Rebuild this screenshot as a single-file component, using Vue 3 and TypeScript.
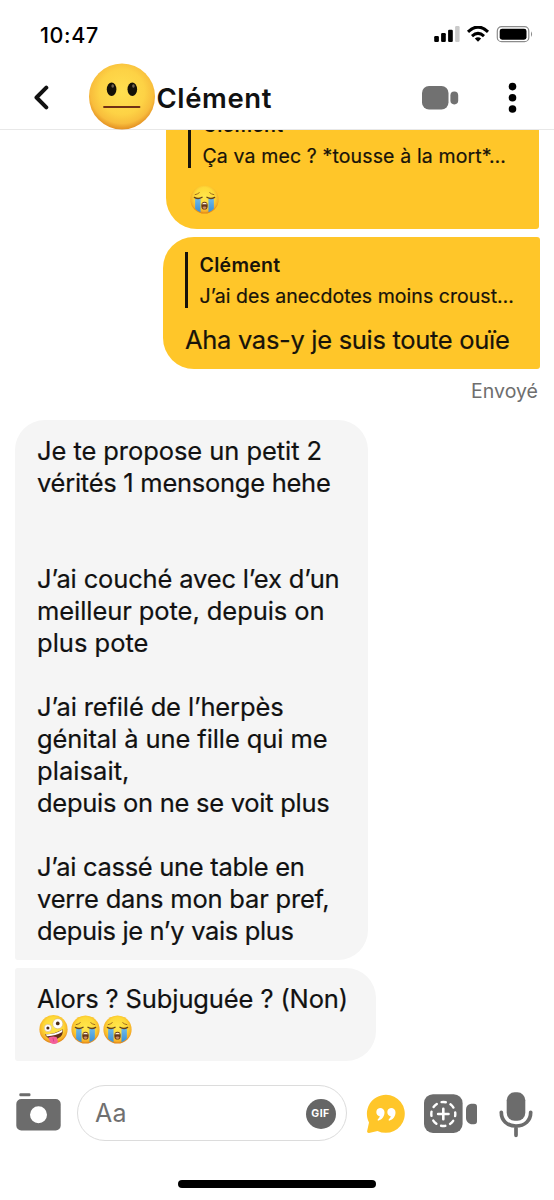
<script setup lang="ts">
import type { Directive } from 'vue'

interface Line {
  text: string
  width: number
}

interface Reply {
  author: string
  quote: Line
  inset: boolean
  body?: Line
}

// Tracks a line of text out (or in) so that it spans the given width.
const vFit: Directive<HTMLElement, number> = {
  mounted(el, { value }) {
    const count = (el.textContent ?? '').length
    if (!count) return
    const natural = el.getBoundingClientRect().width
    el.style.letterSpacing = `${(value - natural) / count}px`
  },
}

const replies: Reply[] = [
  { author: 'Clément', inset: true, quote: { text: 'Ça va mec ? *tousse à la mort*…', width: 303.5 } },
  {
    author: 'Clément',
    inset: false,
    quote: { text: 'J’ai des anecdotes moins croust…', width: 314.5 },
    body: { text: 'Aha vas-y je suis toute ouïe', width: 324.5 },
  },
]

const story: Line[] = [
  { text: 'Je te propose un petit 2', width: 285 },
  { text: 'vérités 1 mensonge hehe', width: 293.5 },
  { text: '', width: 0 },
  { text: '', width: 0 },
  { text: 'J’ai couché avec l’ex d’un', width: 302.5 },
  { text: 'meilleur pote, depuis on', width: 287.5 },
  { text: 'plus pote', width: 111.5 },
  { text: '', width: 0 },
  { text: 'J’ai refilé de l’herpès', width: 246.5 },
  { text: 'génital à une fille qui me', width: 290.5 },
  { text: 'plaisait,', width: 92.5 },
  { text: 'depuis on ne se voit plus', width: 292.5 },
  { text: '', width: 0 },
  { text: 'J’ai cassé une table en', width: 267.5 },
  { text: 'verre dans mon bar pref,', width: 292.5 },
  { text: 'depuis je n’y vais plus', width: 256.5 },
]
</script>

<template>
  <svg class="defs" width="0" height="0" aria-hidden="true">
    <defs>
      <radialGradient id="skin" cx="50%" cy="42%" r="58%">
        <stop offset="0" stop-color="#ffe84d" />
        <stop offset="0.6" stop-color="#fed938" />
        <stop offset="0.86" stop-color="#f6b028" />
        <stop offset="1" stop-color="#dc7d12" />
      </radialGradient>
      <linearGradient id="tear" x1="0" y1="0" x2="0" y2="1">
        <stop offset="0" stop-color="#6db9ea" />
        <stop offset="1" stop-color="#3b8fd6" />
      </linearGradient>
      <radialGradient id="face" cx="50%" cy="43%" r="57%">
        <stop offset="0" stop-color="#ffdf50" />
        <stop offset="0.6" stop-color="#fdd245" />
        <stop offset="0.84" stop-color="#f8bd3c" />
        <stop offset="1" stop-color="#e38f22" />
      </radialGradient>
      <symbol id="cry" viewBox="0 0 30 30">
        <circle cx="15" cy="15" r="14.6" fill="url(#skin)" />
        <path d="M5.3 14.200h5.600v14a14.400 14.400 0 0 1-5.600-3.600zM19.100 14.200h5.600v10.400a14.400 14.400 0 0 1-5.600 3.600z" fill="url(#tear)" />
        <path d="M4.500 12.800q4 2.400 8-.1M17.500 12.700q4 2.500 8 .1" fill="none" stroke="#65401a" stroke-width="1.300" stroke-linecap="round" />
        <path d="M5.300 10q2.500-.4 4.300-2M20.400 8q1.800 1.600 4.300 2" fill="none" stroke="#9b6720" stroke-width="1" stroke-linecap="round" />
        <ellipse cx="15" cy="21.400" rx="3.300" ry="4" fill="#673719" />
        <path d="M12.600 19.300q2.400-1.700 4.800 0v.5h-4.800z" fill="#fff4df" />
        <ellipse cx="15" cy="23.500" rx="2" ry="1.200" fill="#c98a62" />
      </symbol>
      <symbol id="zany" viewBox="0 0 30 30">
        <circle cx="15" cy="14.700" r="14.600" fill="url(#skin)" />
        <circle cx="9.200" cy="13.400" r="3.800" fill="#fff" stroke="#c9a278" stroke-width=".5" />
        <circle cx="19.400" cy="9" r="5.200" fill="#fff" stroke="#c9a278" stroke-width=".5" />
        <circle cx="9.200" cy="13.500" r="1.600" fill="#4a2a17" />
        <circle cx="19.400" cy="8.700" r="1.900" fill="#4a2a17" />
        <path d="M6 20.200Q17 19.800 24.500 14.800Q26 22 18.500 24.800Q11 27.200 6 20.200z" fill="#63301b" />
        <path d="M7 20.300Q17 19.800 24.200 15.300L24 17.700Q17 22 8.200 21.900z" fill="#fff" />
        <path d="M9.700 23.200Q14 21.700 18.200 22.700L19.500 27Q19.600 30 15.600 30Q12 30 11.200 27.200z" fill="#f45f9c" />
        <path d="M14.500 24l.8 3.500" stroke="#cf3c7c" stroke-width=".8" />
      </symbol>
    </defs>
  </svg>

  <main class="screen">
    <div class="status">
      <span v-fit="59" class="clock">10:47</span>
      <svg class="indicators" width="100" height="18" viewBox="0 0 100 18" role="img" aria-label="Réseau, Wi-Fi, batterie">
        <rect x="0.2" y="10" width="4.7" height="6" rx="1.2" />
        <rect x="7.1" y="7" width="4.7" height="9" rx="1.2" />
        <rect x="14.1" y="3.8" width="4.7" height="12.2" rx="1.2" />
        <rect x="21.1" y="0" width="4.5" height="16" rx="1.2" fill="#cacaca" />
        <g fill="none" stroke="#000" stroke-width="3">
          <path d="M34 5.800Q44 -3.700 54 5.800" />
          <path d="M38 10.100Q44 4.600 50 10.100" />
        </g>
        <path d="M40.800 12.600Q44 10 47.200 12.600L44 15.800z" />
        <rect x="63.3" y="0.6" width="31.5" height="15.1" rx="4.3" fill="none" stroke="#8c8c8c" stroke-width="1.2" />
        <rect x="65.7" y="2.7" width="26.8" height="11" rx="2.4" />
        <path d="M97 5.300q2.200 2.800 0 5.600z" fill="#8c8c8c" />
      </svg>
    </div>

    <header class="header">
      <svg class="back" width="16" height="25" viewBox="0 0 16 25" role="img" aria-label="Retour">
        <path d="M13.300 2.700L3.500 12.500l9.800 9.800" fill="none" stroke="#111" stroke-width="4" stroke-linecap="round" stroke-linejoin="round" />
      </svg>
      <svg class="avatar" width="66" height="67" viewBox="0 0 66 67" role="img" aria-label="Clément">
        <circle cx="33" cy="33.500" r="33" fill="url(#face)" />
        <ellipse cx="22.600" cy="26.200" rx="4.800" ry="6.800" fill="#141008" />
        <ellipse cx="43.300" cy="26.200" rx="4.800" ry="6.800" fill="#141008" />
        <ellipse cx="23.700" cy="23" rx="1.300" ry="1.700" fill="#736451" />
        <ellipse cx="44.400" cy="23" rx="1.300" ry="1.700" fill="#736451" />
        <path d="M15 44h35.500" stroke="#713014" stroke-width="1.800" stroke-linecap="round" />
      </svg>
      <h1 class="name"><span v-fit="115.5">Clément</span></h1>
      <svg class="video" width="38" height="26" viewBox="0 0 38 26" fill="#717171" role="img" aria-label="Appel vidéo">
        <rect x="0" y="1" width="26.500" height="23.500" rx="7" />
        <rect x="28.400" y="6.600" width="7.800" height="12.800" rx="3.800" />
      </svg>
      <svg class="more" width="10" height="32" viewBox="0 0 10 32" role="img" aria-label="Plus">
        <circle cx="4.500" cy="4.600" r="3.800" />
        <circle cx="4.500" cy="15.800" r="3.800" />
        <circle cx="4.500" cy="27" r="3.800" />
      </svg>
    </header>

    <section class="chat">
      <article v-for="(reply, i) in replies" :key="i" class="sent" :class="{ inset: reply.inset }">
        <div class="quoted">
          <p class="author"><span v-fit="81">{{ reply.author }}</span></p>
          <p class="excerpt"><span v-fit="reply.quote.width">{{ reply.quote.text }}</span></p>
        </div>
        <p v-if="reply.body" class="body"><span v-fit="reply.body.width">{{ reply.body.text }}</span></p>
        <svg v-else class="emoji" role="img" aria-label="😭"><use href="#cry" /></svg>
      </article>
      <p class="sent-state"><span v-fit="67">Envoyé</span></p>

      <article class="received story">
        <p v-for="(line, i) in story" :key="i" class="line">
          <span v-if="line.text" v-fit="line.width">{{ line.text }}</span>
        </p>
      </article>
      <article class="received short">
        <p class="line"><span v-fit="311">Alors ? Subjuguée ? (Non)</span></p>
        <div class="emojis">
          <svg class="emoji" role="img" aria-label="🤪"><use href="#zany" /></svg>
          <svg class="emoji" role="img" aria-label="😭"><use href="#cry" /></svg>
          <svg class="emoji" role="img" aria-label="😭"><use href="#cry" /></svg>
        </div>
      </article>
    </section>

    <footer class="composer">
      <svg class="camera" width="46" height="38" viewBox="0 0 46 38" role="img" aria-label="Photo">
        <rect x="3.300" y="0.300" width="11.200" height="2.900" rx="1.200" fill="#6c6c6c" />
        <path fill-rule="evenodd" d="M6 6h33.700a5 5 0 0 1 5 5v21.500a5 5 0 0 1-5 5H5.300a5 5 0 0 1-5-5V11a5 5 0 0 1 5-5zM22.500 13.300a8.500 8.500 0 1 0 0 17 8.500 8.500 0 1 0 0-17z" fill="#6c6c6c" />
      </svg>
      <div class="field">
        <span v-fit="32" class="hint">Aa</span>
        <span class="gif"><span v-fit="18.5">GIF</span></span>
      </div>
      <svg class="question" width="40" height="40" viewBox="0 0 40 40" role="img" aria-label="Question">
        <path d="M20 .8a19 19 0 1 1-8.500 36.100L3 39Q.6 39.200 1.200 36.700L3 28.500A19 19 0 0 1 20 .8z" fill="#ffc629" />
        <g fill="#fff">
          <path d="M14 14a4.300 4.300 0 0 1 4.500 4.600c0 4-2.700 7.100-5.900 8-.8.200-1.400-.6-.7-1.300q1.600-1.300 1.900-3A4.200 4.200 0 0 1 14 14z" />
          <path d="M25 14a4.300 4.300 0 0 1 4.500 4.600c0 4-2.700 7.100-5.900 8-.8.200-1.400-.6-.7-1.300q1.600-1.300 1.900-3A4.200 4.200 0 0 1 25 14z" />
        </g>
      </svg>
      <svg class="clip" width="54" height="40" viewBox="0 0 54 40" role="img" aria-label="Vidéo">
        <rect x="0" y="0.200" width="38.600" height="38.800" rx="9" fill="#6c6c6c" />
        <path d="M47 9.700h3q3 0 3 3v14.500q0 3-3 3h-3Q42 28.500 42 24v-8.500Q42 11 47 9.700z" fill="#6c6c6c" />
        <circle cx="19.300" cy="20" r="12" fill="none" stroke="#fff" stroke-width="2.400" stroke-dasharray="4.400 5.025" stroke-dashoffset="2.200" stroke-linecap="round" />
        <path d="M19.300 14.800v10.400M14.100 20h10.400" stroke="#fff" stroke-width="2.600" stroke-linecap="round" />
      </svg>
      <svg class="mic" width="34" height="46" viewBox="0 0 34 46" role="img" aria-label="Message vocal">
        <rect x="7.700" y="0.300" width="18.600" height="28.500" rx="8" fill="#6c6c6c" />
        <path d="M2.300 20.300C2.300 28.500 8 34 17 34s14.700-5.500 14.700-13.700M17 34v9.300" fill="none" stroke="#6c6c6c" stroke-width="3.700" stroke-linecap="round" />
      </svg>
    </footer>
    <div class="home-bar"></div>
  </main>
</template>

<style>
body {
  margin: 0;
  background: #fff;
}
</style>

<style scoped>
.defs {
  position: absolute;
}

.screen {
  display: flex;
  flex-direction: column;
  width: 554px;
  height: 1200px;
  overflow: hidden;
  background: #fff;
  color: #111;
  font-family: Inter, "Liberation Sans", sans-serif;
}

p,
h1 {
  margin: 0;
  white-space: nowrap;
}

p span,
h1 span {
  display: inline-block;
}

svg {
  display: block;
  flex: none;
}

.status {
  display: flex;
  flex: none;
  justify-content: space-between;
  height: 63px;
  box-sizing: border-box;
  padding: 20px 20px 0 40px;
}

.clock {
  align-self: flex-start;
  margin-top: 2px;
  color: #000;
  font: 500 21.500px/26px Inter, sans-serif;
}

.indicators {
  margin-top: 6px;
}

.header {
  display: flex;
  flex: none;
  align-items: center;
  height: 67px;
  box-sizing: border-box;
  padding: 0 36px 0 33px;
  border-bottom: 1px solid #e8e8e8;
}

.back {
  margin-top: 2px;
}

.avatar {
  z-index: 1;
  margin: 1px 0 0 40px;
}

.name {
  flex: 1;
  margin: 4px 0 0 1.500px;
  font-size: 27.500px;
  font-weight: 600;
  line-height: 34px;
}

.video {
  margin: 3px 48px 0 0;
}

.more {
  margin-top: 3px;
}

.chat {
  display: flex;
  flex: none;
  flex-direction: column;
  height: 931px;
  overflow: hidden;
}

.sent {
  flex: none;
  align-self: flex-end;
  width: 377px;
  height: 132px;
  box-sizing: border-box;
  margin: 8px 14px 0 0;
  padding: 15px 0 0 22px;
  border-radius: 31px 3px 3px 31px;
  background: #ffc629;
  color: #17130a;
}

.sent.inset {
  width: 373px;
  margin: -33px 15px 0 0;
}

.quoted {
  height: 56px;
  box-sizing: border-box;
  padding-left: 11.500px;
  border-left: 3px solid #17130a;
}

.author {
  padding-top: 1px;
  font-size: 19.500px;
  font-weight: 600;
  line-height: 24px;
}

.excerpt {
  margin-top: 6px;
  font-size: 19.500px;
  line-height: 26px;
}

.body {
  margin-top: 16px;
  font-size: 25.500px;
  line-height: 32px;
}

.sent .emoji {
  margin: 17px 0 0 1.500px;
}

.emoji {
  width: 29px;
  height: 29px;
}

.sent-state {
  align-self: flex-end;
  margin: 9px 16px 0 0;
  color: #6e6e6e;
  font-size: 19.500px;
  line-height: 26px;
}

.received {
  flex: none;
  box-sizing: border-box;
  margin-left: 15px;
  padding: 15px 0 0 22px;
  background: #f5f5f5;
  font-size: 25.500px;
}

.story {
  width: 352.500px;
  height: 540px;
  margin-top: 16px;
  border-radius: 30px 30px 30px 3px;
}

.short {
  width: 361px;
  height: 93px;
  margin-top: 8px;
  border-radius: 3px 30px 30px 3px;
}

.line {
  height: 32px;
  line-height: 32px;
}

.line,
.body,
.excerpt {
  -webkit-text-stroke: 0.200px currentColor;
}

.emojis {
  display: flex;
  gap: 3.400px;
  padding: 0 0 0 1.500px;
}

.composer {
  display: flex;
  flex: none;
  align-items: flex-start;
  height: 119px;
  box-sizing: border-box;
  padding: 24px 0 0 16px;
}

.camera {
  margin-top: 8px;
}

.field {
  display: flex;
  align-items: center;
  justify-content: space-between;
  width: 270px;
  height: 56px;
  box-sizing: border-box;
  margin: 0 0 0 15px;
  padding: 0 10.500px 0 17px;
  border: 1.500px solid #dcdcdc;
  border-radius: 28px;
  color: #707070;
}

.hint {
  font-size: 25px;
  line-height: 32px;
}

.gif {
  display: flex;
  align-items: center;
  justify-content: center;
  width: 30px;
  height: 30px;
  margin-top: 2px;
  border-radius: 50%;
  background: #666;
  color: #fff;
  font-size: 10.500px;
  font-weight: 700;
  line-height: 14px;
}

.question {
  margin: 9px 0 0 18.500px;
}

.clip {
  margin: 9px 0 0 18px;
}

.mic {
  margin: 7px 0 0 21.500px;
}

.home-bar {
  flex: none;
  align-self: center;
  width: 198px;
  height: 8px;
  border-radius: 4px;
  background: #000;
}
</style>
